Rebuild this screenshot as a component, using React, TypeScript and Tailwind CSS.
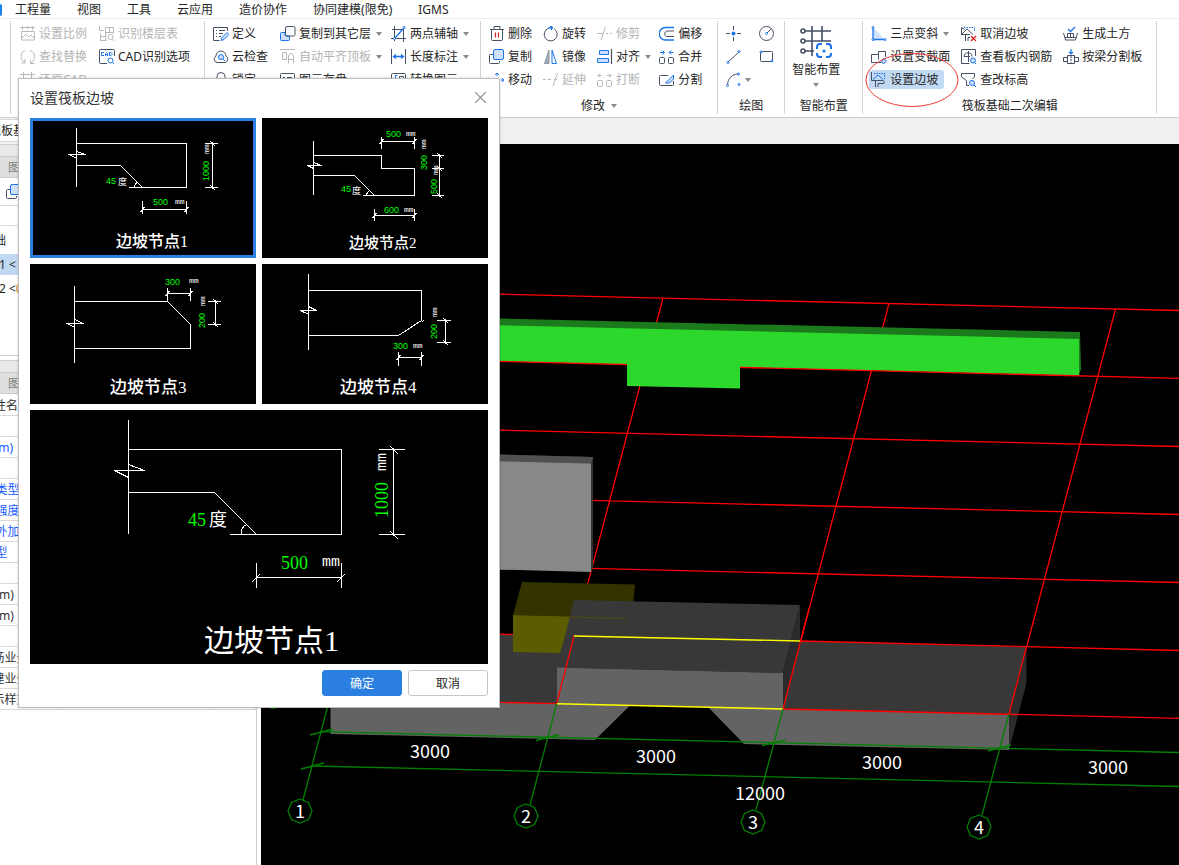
import { useState } from "react";
import type { ReactNode } from "react";
import clsx from "clsx";

const D = "#465064";
const B = "#1a73e8";
const L = "#cfe1fa";
const G = "#b8b8b8";

const menus = ["工程量", "视图", "工具", "云应用", "造价协作", "协同建模(限免)", "IGMS"];

// 16 x 16 ribbon icons
const icons: Record<string, ReactNode> = {
  scale: (
    <g stroke={G}>
      <path d="M0 1.500h15M2.500 0v4M7.500 0v3M12.500 0v4M1.500 5.500v8.500h13V5.500zM2 12l4-4 3 3 2-2 3 3" />
    </g>
  ),
  find: (
    <g stroke={G}>
      <path d="M5 1.500C2 2.500 1 5 1 7.500c0 2.500 1.500 5 4 6M5 10v4H1.500M10 1.500c3 .500 4.500 3.500 4.500 6S13 12.500 11 14M14.500 14.500H10.500V11" />
    </g>
  ),
  restore: (
    <g stroke={G}>
      <path d="M0 2.500h15M3.500 0v14M11.500 0v6M0 12.500h7" />
      <circle cx="11" cy="11" r="3" />
    </g>
  ),
  floorTable: (
    <g stroke={G}>
      <path d="M.5 0v4.500h4M6.500 1.500h8v6M10.500 1.500V7M6.500 1.500v13M1.500 7.500v7h6M1.500 10.500h6M6.500 6.500h8" />
      <circle cx="11.500" cy="11" r="2.500" />
      <path d="M13.500 13l2 2" />
    </g>
  ),
  cad: (
    <>
      <path stroke={D} d="M15.500 7V1.500a1 1 0 0 0-1-1h-13a1 1 0 0 0-1 1v12a1 1 0 0 0 1 1H8" />
      <path stroke={B} d="M5 3.500H2.500v3H5M6.500 7V4.500L7.500 3.500l1 1V7M6.500 5.500h2M10.500 3.500v3H12l1-1v-1l-1-1z" />
      <circle cx="11.500" cy="11.500" r="2.500" stroke={B} />
      <path stroke={B} d="M13.500 13.500l1.500 1.500" />
    </>
  ),
  define: (
    <>
      <path stroke={D} d="M14.500 5V1.500h-14v13h6M3 4.500h1M6 4.500h6M3 7.500h1M6 7.500h4M3 10.500h1M6 10.500h2" />
      <path stroke={B} fill={L} d="M8 14.500l1-3 5-5 2 2-5 5z" />
    </>
  ),
  cloud: (
    <>
      <path stroke={D} d="M4 13.500a3.500 3.500 0 0 1-1-6.500 5 5 0 0 1 10 0 3.500 3.500 0 0 1-1 6.500z" />
      <circle cx="8" cy="8" r="2.500" stroke={B} fill={L} />
      <path stroke={B} d="M10 10l2 2" />
    </>
  ),
  lock: (
    <g stroke={D}>
      <rect x="1.500" y="6.500" width="13" height="9" rx="1" />
      <path d="M4 6V4.500a4 4 0 0 1 8 0V6M8 9v3" />
    </g>
  ),
  copyFloor: (
    <>
      <path stroke={B} fill={L} d="M5 6.500H1.500a1 1 0 0 0-1 1v6a1 1 0 0 0 1 1h7a1 1 0 0 0 1-1V10H6a1 1 0 0 1-1-1z" />
      <rect x="5.500" y=".5" width="9.500" height="9.500" rx="1.500" stroke={D} />
    </>
  ),
  alignTop: (
    <g stroke={G}>
      <path d="M0 .500h15M2.500 3.500h4v7h-4zM8.500 14.500V7L10 4.500h2L13.500 7v7.500M8.500 10.500h5" />
    </g>
  ),
  save: (
    <g stroke={D}>
      <rect x=".5" y="1.500" width="14" height="13" rx="1" />
      <path d="M3 5.500h2M7 5.500h5M3 8.500h9" />
    </g>
  ),
  axis: (
    <>
      <path stroke={D} d="M3.500 0v15M12.500 2v14M1 3.500h12M0 12.500h15" />
      <path stroke={B} strokeWidth="1.300" d="M3 13L13 2" />
      <circle cx="13" cy="1.500" r="1" stroke={B} fill="#fff" />
      <circle cx="3.500" cy="12.500" r="1" stroke={B} fill="#fff" />
    </>
  ),
  length: (
    <>
      <path stroke={D} d="M.5 0v15M14.500 0v15" />
      <path stroke={B} strokeWidth="1.300" d="M3 7.500h9M5 5.500L2.500 7.500 5 9.500M10 5.500l2.500 2-2.500 2" />
    </>
  ),
  convert: (
    <>
      <rect x=".5" y="1.500" width="14" height="13" rx="1" stroke={D} />
      <path stroke={B} d="M6.500 3.500H4.500v6M3 6.500h3" />
      <path stroke={D} d="M8.500 4.500h4v4h-4z" />
    </>
  ),
  trash: (
    <>
      <path stroke={D} d="M1 3.500h14M5 3V.500h6V3M2.500 4v9.500a1 1 0 0 0 1 1h9a1 1 0 0 0 1-1V4" />
      <path stroke="#d91e1e" strokeWidth="1.200" d="M6.500 6.500v5M9.500 6.500v5" />
    </>
  ),
  copy: (
    <>
      <path stroke={D} d="M4 5.500H1.500a1 1 0 0 0-1 1v7a1 1 0 0 0 1 1h8a1 1 0 0 0 1-1V12" />
      <rect x="4.500" y=".5" width="10" height="10" rx="1.500" stroke={B} fill={L} />
    </>
  ),
  move: (
    <g stroke={B}>
      <path d="M8 1v3M8 11v4M1 8h3M12 8h3M6 3l2-2 2 2M6 13l2 2 2-2M3 6L1 8l2 2M13 6l2 2-2 2" />
    </g>
  ),
  rotate: (
    <>
      <path stroke={D} d="M5 2.500a6.500 6.500 0 1 0 6 .300" />
      <path stroke={B} strokeWidth="1.300" d="M5 2.200l4-.700M7 0l2.500 1.500L8 4" />
    </>
  ),
  mirror: (
    <>
      <path stroke="#8d95a5" fill="#a4abb8" d="M6 1v13.500H1.500z" />
      <path stroke={B} fill="#fff" d="M9 1v13.500h4.500z" />
    </>
  ),
  trim: <path stroke={G} d="M0 7.500h6M4 14L8.500 1M9 7.500h2M13 7.500h2" />,
  extend: <path stroke={G} d="M0 7.500h3M5 7.500h3M11 7.500h3M10 14L14.500 1" />,
  align: (
    <>
      <path stroke={D} strokeWidth="1.200" d="M14.500 0v15" />
      <path stroke={B} fill={L} d="M2.500 1.500h9v4h-9zM.5 9.500h11v4H.5z" />
    </>
  ),
  break: (
    <g stroke={G}>
      <rect x=".5" y="8.500" width="5" height="6" rx="1" />
      <rect x="9.500" y="8.500" width="5" height="6" rx="1" />
      <path d="M3 1.500l-2 2 2 2M1 3.500h4M12 1.500l2 2-2 2M10 3.500h4" />
    </g>
  ),
  offset: (
    <>
      <path stroke={B} strokeWidth="1.400" d="M15 1.500H6.500a6 6 0 0 0 0 12.500H15" />
      <path stroke={D} d="M15 5H7.500a3 3 0 0 0 0 5.500H15" />
    </>
  ),
  merge: (
    <>
      <rect x=".5" y="8.500" width="5" height="6" rx="1" stroke={D} />
      <rect x="9.500" y="8.500" width="5" height="6" rx="1" stroke={D} />
      <path stroke={B} d="M1 3.500h4M3.500 1.500l2 2-2 2M14.500 3.500h-4M12 1.500l-2 2 2 2" />
    </>
  ),
  split: (
    <>
      <path stroke={D} d="M9 3.500H1.500a1 1 0 0 0-1 1v8a1 1 0 0 0 1 1h12a1 1 0 0 0 1-1V9" />
      <path stroke={B} fill={L} d="M6.500 11l8-8v4l-4 4z" />
    </>
  ),
  point: (
    <>
      <path stroke={D} d="M0 7.500h4M11 7.500h4M7.500 0v4M7.500 11v4" />
      <circle cx="7.500" cy="7.500" r="2" fill={B} />
    </>
  ),
  line: (
    <>
      <path stroke={D} d="M2 13L13 3" />
      <circle cx="13" cy="2.500" r="1" stroke={B} />
      <circle cx="2" cy="13.500" r="1" stroke={B} />
    </>
  ),
  arc: (
    <>
      <path stroke={D} d="M1.500 13C2 6 6 2.500 12 2" />
      <circle cx="12.500" cy="2" r="1" stroke={B} />
      <circle cx="1.500" cy="13.500" r="1" stroke={B} />
      <circle cx="13" cy="12.500" r="1" stroke={B} />
    </>
  ),
  circle: (
    <>
      <circle cx="7.500" cy="7.500" r="7" stroke={D} />
      <path stroke={D} d="M8 7l4-4" />
      <circle cx="7.500" cy="7.500" r="1" stroke={B} />
    </>
  ),
  rect: (
    <>
      <rect x="1.500" y="2.500" width="12" height="10" rx="1" stroke={D} />
      <circle cx="2" cy="3" r="1" fill="#fff" stroke={B} />
      <circle cx="13" cy="12" r="1" fill="#fff" stroke={B} />
    </>
  ),
  slope3: (
    <>
      <path fill={L} d="M2 1l11 12H2z" />
      <path stroke={B} strokeWidth="1.300" d="M2 1v12.500h11" />
      <circle cx="2" cy="1.500" r="1" stroke={B} fill="#fff" />
      <circle cx="2" cy="13.500" r="1" stroke={B} fill="#fff" />
      <circle cx="14" cy="13.500" r="1" stroke={B} fill="#fff" />
    </>
  ),
  section: (
    <>
      <path stroke={D} d="M14.500 8V2.500h-7v3h-7v8h10M7.500 5.500v5" />
      <path stroke={B} fill={L} d="M12.500 9.500l3 2-3 3.500-2-2z" />
    </>
  ),
  slope: (
    <>
      <path stroke={B} strokeWidth="1.200" strokeDasharray="1.500 1" d="M3 1.500h10.500V7" />
      <path stroke={B} d="M2 7.500L7 3l5 4.500" />
      <path stroke={D} d="M.5 0v8.500h12M4.500 9v6M7 15v-3.500h6V9" />
    </>
  ),
  cancelSlope: (
    <>
      <path stroke={B} strokeDasharray="1.500 1" d="M3 1.500h10.500V5" />
      <path stroke={D} d="M.5 8.500v-7l3 2M.5 8.500L6 3l6 5.500M4.500 9v6M7 15v-3.500h2M0 8.500h9" />
      <path stroke="#e02020" strokeWidth="1.300" d="M10 10l5 5M15 10l-5 5" />
    </>
  ),
  rebar: (
    <>
      <path stroke={D} d="M14.500 7V.5H.5v14h8M3 7.500c0-5 8-5 8 0M7.500 2v11M3 7.500h6" />
      <circle cx="12" cy="11.500" r="2.500" stroke={B} fill={L} />
      <path stroke={B} d="M13.500 13.500l1.500 1.500" />
    </>
  ),
  elevation: (
    <>
      <path stroke={D} d="M8 13.500H5.500v-5L.5 5V1.500h13V5l-2 2" />
      <circle cx="11" cy="11" r="2.500" stroke={B} fill={L} />
      <path stroke={B} d="M13 13l2 2" />
    </>
  ),
  earth: (
    <>
      <path stroke={B} strokeWidth="1.300" d="M5 3l2.500 2.500L12 1" />
      <path stroke={D} d="M.5 7l2 7h10l2-7M4.500 11V7.500h6V11M2 11.500h11M7.500 8v3" />
    </>
  ),
  beamSplit: (
    <>
      <path stroke={B} strokeWidth="1.200" d="M8 0v5M6 3l2 2 2-2" />
      <path stroke={D} d="M4.500 6.500h7v8h-7zM4 8.500H.5v4H4M12 8.500h3.500v4H12" />
      <path stroke={D} strokeDasharray="2 1" d="M8 7v7" />
    </>
  ),
};

function Icon({ name }: { name: string }) {
  return (
    <svg width="16" height="16" viewBox="0 0 16 16" fill="none" className="shrink-0" aria-hidden="true">
      {icons[name]}
    </svg>
  );
}

function Caret({ className }: { className?: string }) {
  return (
    <svg width="6" height="4" viewBox="0 0 6 4" className={clsx("shrink-0", className)} aria-hidden="true">
      <path d="M0 0h6L3 4z" fill="#8a8a8a" />
    </svg>
  );
}

type ToolProps = { icon: string; label?: string; title?: string; caret?: boolean; disabled?: boolean; active?: boolean };

function Tool({ icon, label, title, caret, disabled, active }: ToolProps) {
  return (
    <div className="flex h-[23px] items-center">
      <button
        type="button"
        disabled={disabled}
        aria-label={label ?? title}
        className={clsx(
          "flex h-[19px] items-center gap-[3px] rounded-[3px] pl-[2px] whitespace-nowrap",
          caret ? "pr-[3px]" : "pr-[6px]",
          disabled ? "text-[#b4b4b4]" : "text-[#262626]",
          active && "bg-[#c2d9f3]",
        )}
      >
        <Icon name={icon} />
        {label ? <span>{label}</span> : null}
        {caret ? <Caret className={label ? "ml-[2px]" : undefined} /> : null}
      </button>
    </div>
  );
}

function Group({ title, caret, className, children }: { title?: string; caret?: boolean; className?: string; children: ReactNode }) {
  return (
    <section className="flex h-[93px] shrink-0 flex-col justify-between border-r border-[#d4d4d4] pt-px">
      <div className={clsx("flex", className)}>{children}</div>
      {title ? (
        <h2 className="flex h-4 items-center justify-center gap-[6px] text-[#262626]">
          {title}
          {caret ? <Caret /> : null}
        </h2>
      ) : null}
    </section>
  );
}

function Ribbon() {
  return (
    <div className="flex h-[99px] shrink-0 overflow-hidden border-b border-[#cfcfcf] bg-white pt-[2px]">
      <div className="h-[93px] w-[11px] shrink-0 border-r border-[#d4d4d4]" />
      <Group className="gap-1 pr-2 pl-[7px]">
        <div>
          <Tool icon="scale" label="设置比例" disabled />
          <Tool icon="find" label="查找替换" disabled />
          <Tool icon="restore" label="还原CAD" disabled />
        </div>
        <div>
          <Tool icon="floorTable" label="识别楼层表" disabled />
          <Tool icon="cad" label="CAD识别选项" />
        </div>
      </Group>
      <Group className="gap-1 pr-2 pl-[6px]">
        <div>
          <Tool icon="define" label="定义" />
          <Tool icon="cloud" label="云检查" />
          <Tool icon="lock" label="锁定" />
        </div>
        <div>
          <Tool icon="copyFloor" label="复制到其它层" caret />
          <Tool icon="alignTop" label="自动平齐顶板" caret disabled />
          <Tool icon="save" label="图元存盘" />
        </div>
        <div>
          <Tool icon="axis" label="两点辅轴" caret />
          <Tool icon="length" label="长度标注" caret />
          <Tool icon="convert" label="转换图元" />
        </div>
      </Group>
      <Group title="修改" caret className="gap-[3px] pr-[9px] pl-[6px]">
        <div>
          <Tool icon="trash" label="删除" />
          <Tool icon="copy" label="复制" />
          <Tool icon="move" label="移动" />
        </div>
        <div>
          <Tool icon="rotate" label="旋转" />
          <Tool icon="mirror" label="镜像" />
          <Tool icon="extend" label="延伸" disabled />
        </div>
        <div>
          <Tool icon="trim" label="修剪" disabled />
          <Tool icon="align" label="对齐" caret />
          <Tool icon="break" label="打断" disabled />
        </div>
        <div>
          <Tool icon="offset" label="偏移" />
          <Tool icon="merge" label="合并" />
          <Tool icon="split" label="分割" />
        </div>
      </Group>
      <Group title="绘图" className="gap-[3px] pr-[3px] pl-[6px]">
        <div>
          <Tool icon="point" title="点" />
          <Tool icon="line" title="直线" />
          <Tool icon="arc" title="弧" caret />
        </div>
        <div>
          <Tool icon="circle" title="圆" />
          <Tool icon="rect" title="矩形" />
        </div>
      </Group>
      <Group title="智能布置" className="pr-[22px] pl-[7px]">
        <button type="button" className="flex flex-col items-center text-[#262626]">
          <svg width="32" height="34" viewBox="0 0 32 34" fill="none" className="mt-[3px]" aria-hidden="true">
            <g stroke={D} strokeWidth="1.600">
              <path d="M5 6h26M5 16h26M5 26h9M12 1v30M22 1v15" />
              <circle cx="3" cy="6" r="2" />
              <circle cx="3" cy="16" r="2" />
              <circle cx="3" cy="26" r="2" />
            </g>
            <path
              stroke={B}
              strokeWidth="2"
              d="M17 24v-2a3 3 0 0 1 3-3h2M26 19h2a3 3 0 0 1 3 3v2M31 28v1a3 3 0 0 1-3 3h-2M22 32h-2a3 3 0 0 1-3-3v-1"
            />
            <circle cx="24" cy="26" r="1.500" fill={B} />
          </svg>
          <span className="mt-[2px] leading-[18px]">智能布置</span>
          <Caret className="mt-1" />
        </button>
      </Group>
      <Group title="筏板基础二次编辑" className="gap-[3px] pr-2 pl-[6px]">
        <div>
          <Tool icon="slope3" label="三点变斜" caret />
          <Tool icon="section" label="设置变截面" />
          <Tool icon="slope" label="设置边坡" active />
        </div>
        <div>
          <Tool icon="cancelSlope" label="取消边坡" />
          <Tool icon="rebar" label="查看板内钢筋" />
          <Tool icon="elevation" label="查改标高" />
        </div>
        <div>
          <Tool icon="earth" label="生成土方" />
          <Tool icon="beamSplit" label="按梁分割板" />
        </div>
      </Group>
    </div>
  );
}

const properties: { name: string; tone?: "blue" | "group" }[] = [
  { name: "名称", tone: "blue" },
  { name: "厚度(mm)", tone: "blue" },
  { name: "材质", tone: "blue" },
  { name: "混凝土类型", tone: "blue" },
  { name: "混凝土强度等级", tone: "blue" },
  { name: "混凝土外加剂", tone: "blue" },
  { name: "泵送类型", tone: "blue" },
  { name: "类别" },
  { name: "顶标高(m)" },
  { name: "底标高(m)" },
  { name: "备注" },
  { name: "钢筋业务属性", tone: "group" },
  { name: "土建业务属性", tone: "group" },
  { name: "显示样式", tone: "group" },
];

function PanelHead() {
  return (
    <>
      <div className="h-3 border-t border-[#cdcdcd] bg-[#e9e9e9]" />
      <div className="flex h-[22px] items-center border-y border-[#c6cad2] bg-[#dedede] pt-[2px] pl-[80px] text-[#808080]">图</div>
    </>
  );
}

function Sidebar() {
  return (
    <aside className="w-[257px] shrink-0 overflow-hidden border-r border-[#cfcfcf] bg-white">
      {/* panel content is scrolled past its left edge */}
      <div className="-ml-[72px]">
        <PanelHead />
        <div className="flex h-7 items-center border-b border-[#d9d9d9] pl-[78px]">
          <button type="button" aria-label="复制">
            <Icon name="copy" />
          </button>
        </div>
        <div className="h-[20px] border-b border-[#d9d9d9]" />
        <ul className="flex h-[130px] flex-col gap-[3px] border-b border-[#cdcdcd] pt-1 text-[#262626]">
          <li className="flex h-[21px] items-center pl-[30px]">筏板基础</li>
          <li className="flex h-[21px] items-center bg-[#c2d9f3] pt-px pl-[53px]">FB-1 &lt;</li>
          <li className="flex h-[21px] items-center pl-[53px]">
            FB-2 &lt;<span className="text-[#d07820]">0</span>
          </li>
        </ul>
        <div className="h-1" />
        <PanelHead />
        <table className="w-full border-collapse text-left text-[#333]">
          <thead>
            <tr className="h-[21px] border-b border-[#d9d9d9]">
              <th className="w-[26px] p-0" />
              <th className="p-0 pt-[3px] pl-7 font-normal">属性名称</th>
              <th className="w-[156px] p-0" />
              <th className="w-[41px] p-0" />
            </tr>
          </thead>
          <tbody>
            {properties.map((p) => (
              <tr key={p.name} className="h-[21px] border-b border-[#d9d9d9]">
                <td className="border-r border-[#d9d9d9] p-0" />
                <td
                  className={clsx(
                    "border-r border-[#d9d9d9] p-0 pt-[2px] whitespace-nowrap",
                    p.tone === "group" ? "pl-[26px]" : "pl-[5px]",
                    p.tone === "blue" && "text-[#1a5cff]",
                  )}
                >
                  {p.name}
                </td>
                <td className="border-r border-[#d9d9d9] p-0" />
                <td className="border-r border-[#d9d9d9] p-0" />
              </tr>
            ))}
          </tbody>
        </table>
      </div>
    </aside>
  );
}

const bubbles = [
  { n: "1", x: 300, y: 811 },
  { n: "2", x: 526, y: 816 },
  { n: "3", x: 753, y: 822 },
  { n: "4", x: 979, y: 827 },
];

const dims = [
  { v: "3000", x: 430, y: 758 },
  { v: "3000", x: 656, y: 763 },
  { v: "3000", x: 882, y: 769 },
  { v: "3000", x: 1108, y: 774 },
  { v: "12000", x: 760, y: 800 },
];

function Scene() {
  return (
    <svg
      viewBox="261 144 918 721"
      preserveAspectRatio="xMinYMin slice"
      className="block size-full bg-black"
      role="img"
      aria-label="三维视图"
    >
      {/* grid lines behind the solids */}
      <g stroke="#f00" strokeWidth="1.300">
        <path d="M261 288.500L1179 310.500M261 424.500L1179 446.500M261 492.500L1179 514.500M261 560.500L1179 582.500M663 298L574 636M889 303.500L783 709" />
        <path d="M1115.500 309L1009 714" />
      </g>

      {/* beam */}
      <path d="M261 313l819 19 1 37-2 6-818-20z" fill="#1b7a1b" />
      <path d="M261 319.500l818 19.500v36.500l-818-20z" fill="#2dd82d" />
      <path d="M261 355.500L1179 378.300" stroke="#f00" strokeWidth="1.300" />
      <path d="M627 362l113 3v23.500l-113-2.500z" fill="#2dd82d" />

      {/* column */}
      <path d="M400 452l193 5v111l-2 4z" fill="#333" />
      <path d="M400 452l193 5-2 6.500-191-4z" fill="#505050" />
      <path d="M400 459l191 4.500V572l-191-5z" fill="#888" />

      {/* raft slabs */}
      <path d="M261 628l313 8-17 67.700-296-7z" fill="#383838" />
      <path d="M330.500 698l299.500 7.500L595 740l-264.500-6z" fill="#636363" />
      <path d="M708 707l301 7v36l-265-6z" fill="#636363" />
      <path d="M800 641l226.500 5.500L1009 714l-226-5z" fill="#383838" />
      <path d="M1026.500 646.500V683L1009 750v-36z" fill="#2c2c2c" />
      <path d="M261 628l313 8M261 696.500l296 7.200" stroke="#f00" strokeWidth="1.300" />

      {/* sump */}
      <path d="M522 582l113 2.500-3 34-119-3.500z" fill="#333300" />
      <path d="M513 615l60 1.500-13 36.500-47-1z" fill="#5c5c00" />
      <path d="M574 600l226 5-17 68-226-5.500z" fill="#383838" />
      <path d="M569 617l58 1.500" stroke="#4d4a10" />
      <path d="M557 667.500l226 5.500v36l-226-5.300z" fill="#636363" />
      <path d="M800 605v36l-17 68v-36z" fill="#2b2b2b" />

      <path
        d="M800 641l379 9.500M783 709l396 9.300M574 636l-17.300 67.700M809 608.500L783 709M1026.500 646.500L1009 714"
        stroke="#f00"
        strokeWidth="1.300"
      />
      <path d="M574 636l226 5M557 703.700l226 5.300" stroke="#ff0" strokeWidth="1.400" />

      {/* axis dimensions */}
      <g stroke="#008000" strokeWidth="1.300" fill="none">
        <path d="M321 731.700L1179 752.500M312.500 766L1179 786.500" />
        <path d="M327.500 707L303 800M556.700 703.700L530 805M783 709l-27 101M1009 714l-27 101" />
        <path d="M310 735l23-6M536 740.500l23-6M762 745.500l23-5.500M988 751l23-6M301 769l23-6" />
        <circle cx="273" cy="696" r="12" />
        {bubbles.map((b) => (
          <path key={b.n} transform={`translate(${b.x} ${b.y})`} d="M0-12l8.500 3.500L12 0 8.500 8.500 0 12-8.500 8.500-12 0-8.500-8.500z" />
        ))}
      </g>
      <g fill="#fff" textAnchor="middle" fontSize="18" fontFamily='"Noto Sans CJK SC", sans-serif'>
        {bubbles.map((b) => (
          <text key={b.n} x={b.x} y={b.y + 7}>
            {b.n}
          </text>
        ))}
        {dims.map((d) => (
          <text key={d.x} x={d.x} y={d.y}>
            {d.v}
          </text>
        ))}
      </g>
    </svg>
  );
}

type Label = { t: string; x: number; y: number; up?: boolean };
type NodeDrawing = { title: string; titleX: number; titleY: number; size: number; d: string; labels: Label[] };

const nodes: NodeDrawing[] = [
  {
    title: "边坡节点1",
    titleX: 86,
    titleY: 129,
    size: 16,
    d: "M46.500 10v59M46.500 25.500h110v44h-58M46.500 47.500h44l22 22M38.500 36.500h17M38.500 36.500l8 3.500M46.500 33.500l9 3M104.500 69.500q0-4 3-5M175 25.500h13M175 69.500h13M182.500 24v47M180 23l5 5M180 67l5 5M112.500 83v13M156.500 83v13M112.500 91.500h44M110.500 94l4-5M154.500 94l4-5",
    labels: [
      { t: "45", x: 76, y: 66 },
      { t: "度", x: 88, y: 67 },
      { t: "500", x: 123, y: 87 },
      { t: "mm", x: 145, y: 86 },
      { t: "mm", x: 179, y: 36, up: true },
      { t: "1000", x: 179, y: 63, up: true },
    ],
  },
  {
    title: "边坡节点2",
    titleX: 87,
    titleY: 130,
    size: 15,
    d: "M51.500 23v54M51.500 37.500h68v13h33v27h-52M51.500 57.500h41l20 20M45.500 47.500h14M45.500 47.500l6 3M51.500 44.500l8 3M104.500 77.500q0-3 3-5M119.500 19v12M152.500 19v12M119.500 23.500h33M117.500 26l4-5M150.500 26l4-5M170 37.500h12M170 50.500h12M170 77.500h12M177.500 36v43M175 35l5 5M175 48l5 5M175 75l5 5M112.500 91v12M152.500 91v12M112.500 97.500h40M110.500 100l4-5M150.500 100l4-5",
    labels: [
      { t: "45", x: 79, y: 74 },
      { t: "度", x: 90, y: 76 },
      { t: "500", x: 124, y: 19 },
      { t: "mm", x: 144, y: 18 },
      { t: "mm", x: 164, y: 31, up: true },
      { t: "300", x: 165, y: 52, up: true },
      { t: "mm", x: 176, y: 57, up: true },
      { t: "500", x: 175, y: 76, up: true },
      { t: "600", x: 122, y: 95 },
      { t: "mm", x: 142, y: 94 },
    ],
  },
  {
    title: "边坡节点3",
    titleX: 80,
    titleY: 129,
    size: 17,
    d: "M44.500 22v77M44.500 37.500h93l23 23v24h-116M36.500 59.500h17M36.500 59.500l8 3.500M44.500 55.500l9 4M137.500 24v13M160.500 24v13M137.500 29.500h23M135.500 32l4-5M158.500 32l4-5M178 37.500h13M178 60.500h13M185.500 36v26M183 35l5 5M183 58l5 5",
    labels: [
      { t: "300", x: 135, y: 21 },
      { t: "mm", x: 159, y: 19 },
      { t: "mm", x: 175, y: 42, up: true },
      { t: "200", x: 175, y: 64, up: true },
    ],
  },
  {
    title: "边坡节点4",
    titleX: 78,
    titleY: 129,
    size: 17,
    d: "M46.500 10v76M46.500 26.500h113v30l-23 15h-90M38 46.500h17M38 46.500l8 3.500M46.500 42.500l8 4M160 57.500l2-1M175 56.500h14M175 78.500h14M183.500 55v25M181 54l5 5M181 76l5 5M136.500 88v14M159.500 88v14M136.500 93.500h23M134.500 96l4-5M157.500 96l4-5",
    labels: [
      { t: "300", x: 131, y: 85 },
      { t: "mm", x: 151, y: 84 },
      { t: "mm", x: 175, y: 53, up: true },
      { t: "200", x: 175, y: 75, up: true },
    ],
  },
];

const preview: NodeDrawing = {
  title: "边坡节点1",
  titleX: 174,
  titleY: 241,
  size: 30,
  d: "M98.500 10v114M98.500 39.500h213v85h-112M98.500 82.500h86l42 42M84.500 60.500h30M84.500 60.500l14 7M98.500 54.500l16 6M211.500 124.500q-1-7 5-10M349 39.500h26M349 124.500h26M363.500 38v88M360 36l8 8M360 121l8 8M226.500 153v25M311.500 153v25M226.500 167.500h85M222 172l8-8M307 172l8-8",
  labels: [
    { t: "45", x: 158, y: 116 },
    { t: "度", x: 179, y: 116 },
    { t: "500", x: 251, y: 159 },
    { t: "mm", x: 292, y: 156 },
    { t: "mm", x: 356, y: 61, up: true },
    { t: "1000", x: 358, y: 108, up: true },
  ],
};

function NodeSvg({ node, large }: { node: NodeDrawing; large?: boolean }) {
  const digits = large ? "font-['Liberation_Serif','Noto_Sans_CJK_SC',serif] text-[18px]" : "font-['Liberation_Sans','Noto_Sans_CJK_SC',sans-serif] text-[9px]";
  const unit = large ? "font-['Liberation_Mono',monospace] text-[15px]" : "font-['Liberation_Mono',monospace] text-[8px]";
  return (
    <svg viewBox={large ? "0 0 458 254" : "0 0 226 140"} className="block w-full bg-black" aria-hidden="true">
      <path d={node.d} stroke="#fff" fill="none" shapeRendering="crispEdges" />
      {node.labels.map((l, i) => (
        <text
          key={i}
          x={l.x}
          y={l.y}
          transform={l.up ? `rotate(-90 ${l.x} ${l.y})` : undefined}
          fill={/\d/.test(l.t) ? "#00ff00" : "#fff"}
          className={l.t === "mm" ? unit : digits}
        >
          {l.t}
        </text>
      ))}
      <text
        x={node.titleX}
        y={node.titleY}
        fontSize={node.size}
        fill="#fff"
        className={clsx("font-['Liberation_Serif','Noto_Sans_CJK_SC',serif]", !large && "font-medium")}
      >
        {node.title}
      </text>
    </svg>
  );
}

function SlopeDialog() {
  const [selected, setSelected] = useState(0);

  return (
    <div
      role="dialog"
      aria-labelledby="slope-title"
      className="absolute top-[78px] left-[18px] w-[482px] border border-[#bdbdbd] bg-white px-[11px] pb-[11px] shadow-[0_0_3px_rgba(0,0,0,0.15)]"
    >
      <div className="flex h-[39px] items-center justify-between pb-[2px]">
        <h1 id="slope-title" className="text-sm text-[#333]">
          设置筏板边坡
        </h1>
        <button type="button" aria-label="关闭" className="p-[2px]">
          <svg width="11" height="11" viewBox="0 0 11 11" aria-hidden="true">
            <path d="M0 0l11 11M11 0L0 11" stroke="#8a8a8a" strokeWidth="1.200" />
          </svg>
        </button>
      </div>

      <div className="grid grid-cols-2 gap-[6px]">
        {nodes.map((node, i) => (
          <button key={node.title} type="button" aria-label={node.title} aria-pressed={i === selected} onClick={() => setSelected(i)} className="relative">
            <NodeSvg node={node} />
            {i === selected ? <span className="absolute inset-0 border-[3px] border-[#2b7fe0]" /> : null}
          </button>
        ))}
        <div className="col-span-2">{selected === 0 ? <NodeSvg node={preview} large /> : <NodeSvg node={nodes[selected]} />}</div>
      </div>

      <div className="mt-[6px] flex justify-end gap-[6px]">
        <button type="button" className="h-[26px] w-20 rounded-[3px] border border-[#2b7fe0] bg-[#2b7fe0] pt-[2px] text-white">
          确定
        </button>
        <button type="button" className="h-[26px] w-20 rounded-[3px] border border-[#c6c6c6] bg-white pt-[2px] text-[#262626]">
          取消
        </button>
      </div>
    </div>
  );
}

export default function App() {
  return (
    <div className="relative flex h-screen flex-col overflow-hidden bg-white font-['Noto_Sans','Noto_Sans_CJK_SC',sans-serif] text-xs">
      <nav className="flex h-[19px] shrink-0 items-center border-b border-[#ececec] pt-px text-[#262626]">
        <span className="h-3 w-[2px] rounded-r-full bg-[#1a7ff0]" />
        <div className="flex gap-[26px] pl-[13px]">
          {menus.map((m) => (
            <a key={m} href="#" className="whitespace-nowrap">
              {m}
            </a>
          ))}
        </div>
      </nav>

      <Ribbon />

      <div className="h-[26px] shrink-0 overflow-hidden bg-[#f0f0f0] pt-px">
        <select aria-label="构件类型" className="-ml-[72px] block h-[23px] w-[200px] appearance-none border border-[#d9d9d9] bg-white pl-[60px] text-[#262626]">
          <option>筏板基础</option>
        </select>
      </div>

      <div className="flex min-h-0 flex-1">
        <Sidebar />
        <main className="ml-1 min-w-0 flex-1">
          <Scene />
        </main>
      </div>

      <SlopeDialog />

      {/* hand-drawn mark round the active tool */}
      <svg width="94" height="54" viewBox="0 0 94 54" className="pointer-events-none absolute top-[53px] left-[865px]" aria-hidden="true">
        <ellipse cx="47" cy="27" rx="46" ry="26.500" fill="none" stroke="#f23c3c" />
      </svg>
    </div>
  );
}
